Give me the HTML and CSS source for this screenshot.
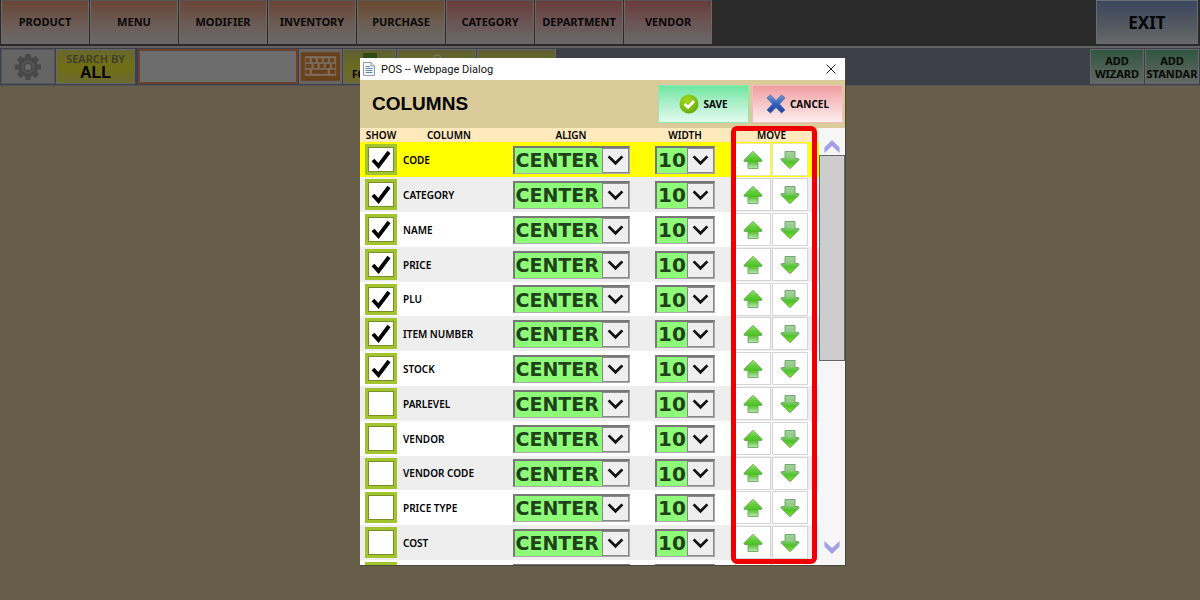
FILE: index.html
```html
<!DOCTYPE html>
<html lang="en">
<head>
<meta charset="utf-8">
<title>POS</title>
<link rel="stylesheet" href="styles.css">
</head>
<body>
<svg class="defs" aria-hidden="true">
  <defs>
    <linearGradient id="leafUp" x1="0" y1="0" x2="0" y2="1"><stop offset="0" stop-color="#9be07c"/><stop offset=".3" stop-color="#62cf3a"/><stop offset=".6" stop-color="#4fbf26"/><stop offset="1" stop-color="#c0e6b8"/></linearGradient>
    <linearGradient id="leafDown" x1="0" y1="0" x2="0" y2="1"><stop offset="0" stop-color="#a8cfa4"/><stop offset=".35" stop-color="#8fce84"/><stop offset=".6" stop-color="#4fc02c"/><stop offset="1" stop-color="#7fe624"/></linearGradient>
    <radialGradient id="okBall" cx=".4" cy=".3" r=".8"><stop offset="0" stop-color="#a5da1c"/><stop offset="1" stop-color="#62a80c"/></radialGradient>
    <linearGradient id="crossBlue" x1="0" y1="0" x2="0" y2="1"><stop offset="0" stop-color="#7398d8"/><stop offset=".5" stop-color="#3262bd"/><stop offset="1" stop-color="#1d3f9c"/></linearGradient>
  </defs>
  <symbol id="up" viewBox="0 0 20 20"><path d="M10 1.200 19 10.200Q19.200 11.500 18 11.500H15V18.500H5V11.500H2Q.800 11.500 1 10.200Z" fill="url(#leafUp)" stroke="#6aa95e" stroke-width=".9" stroke-linejoin="round"/></symbol>
  <symbol id="down" viewBox="0 0 20 20"><path d="M5 1.500H15V8.500H18Q19.200 8.500 19 9.800L10 18.800 1 9.800Q.800 8.500 2 8.500H5Z" fill="url(#leafDown)" stroke="#6aa066" stroke-width=".9" stroke-linejoin="round"/></symbol>
</svg>

<div class="page">
  <nav class="tabs">
    <button class="tab">PRODUCT</button>
    <button class="tab">MENU</button>
    <button class="tab">MODIFIER</button>
    <button class="tab">INVENTORY</button>
    <button class="tab tab-brown">PURCHASE</button>
    <button class="tab tab-red">CATEGORY</button>
    <button class="tab tab-red">DEPARTMENT</button>
    <button class="tab tab-red">VENDOR</button>
    <button class="exit">EXIT</button>
  </nav>
  <div class="toolbar">
    <button class="tool gear" aria-label="Settings">
      <svg width="28" height="28" viewBox="-15 -15 30 30"><g fill="#484848"><circle r="10.500"/><path d="M-3.500-9-2.500-14H2.500L3.500-9V9L2.500 14H-2.500L-3.500 9Z"/><path transform="rotate(45)" d="M-3.500-9-2.500-14H2.500L3.500-9V9L2.500 14H-2.500L-3.500 9Z"/><path transform="rotate(90)" d="M-3.500-9-2.500-14H2.500L3.500-9V9L2.500 14H-2.500L-3.500 9Z"/><path transform="rotate(135)" d="M-3.500-9-2.500-14H2.500L3.500-9V9L2.500 14H-2.500L-3.500 9Z"/></g><circle r="6" fill="none" stroke="#555" stroke-width="2"/><circle r="3.300" fill="#696969"/></svg>
    </button>
    <button class="tool search-by"><span class="search-hint">SEARCH BY</span><span class="search-mode">ALL</span></button>
    <input class="search-box" type="text" aria-label="Search">
    <button class="tool keyboard" aria-label="Keyboard">
      <svg width="39" height="29" viewBox="0 0 41 30"><rect width="41" height="30" fill="#68401a"/><rect x="4" y="4" width="33" height="21" rx="1" fill="#7a6a58"/><g stroke="#68401a" stroke-width="4"><path d="M5 8.500H36" stroke-dasharray="4 2.400"/><path d="M5 14.500H36" stroke-dasharray="6 2.400 4 2.400 4 2.400 4 2.400"/><path d="M5 20.500H9M11.500 20.500H28M30.500 20.500H36"/></g></svg>
    </button>
    <button class="tool yellow"><svg class="green-mark" width="14" height="10" aria-hidden="true"><rect width="14" height="10" rx="1" fill="#2c4a17"/></svg><span class="cut-label">FO</span></button>
    <button class="tool yellow wide" aria-label="Find"><svg width="14" height="30" viewBox="0 0 14 30"><circle cx="7" cy="6" r="4" fill="none" stroke="#777560" stroke-width="1.500"/></svg></button>
    <button class="tool yellow wide" aria-label="List"></button>
    <div class="add-group">
      <button class="tool add">ADD<br>WIZARD</button>
      <button class="tool add">ADD<br>STANDAR</button>
    </div>
  </div>
  <main class="canvas"></main>
</div>

<section class="dialog" role="dialog" aria-labelledby="dialog-title">
  <div class="titlebar">
    <svg width="12" height="14" viewBox="0 0 12 14"><path d="M.500.500H8L11.500 4V13.500H.500Z" fill="#f4f8fb" stroke="#8f9ba3"/><path d="M8 .500V4H11.500" fill="none" stroke="#8f9ba3"/><path d="M2.500 4.500H7M2.500 6.500H9.500M2.500 8.500H9.500M2.500 10.500H9.500" stroke="#5e8bb0"/></svg>
    <span class="window-name">POS -- Webpage Dialog</span>
    <button class="close" aria-label="Close"><svg width="10" height="10" viewBox="0 0 10 10"><path d="M.500.500 9.500 9.500M9.500.500.500 9.500" stroke="#222" fill="none"/></svg></button>
  </div>
  <header class="dialog-head">
    <h1 class="heading" id="dialog-title">COLUMNS</h1>
    <button class="action save"><svg width="20" height="20" viewBox="0 0 20 20"><circle cx="10" cy="10" r="9.500" fill="url(#okBall)"/><path d="M5.500 10 9 13.200 15 7" fill="none" stroke="#fff" stroke-width="2.800"/></svg>SAVE</button>
    <button class="action cancel"><svg width="20" height="20" viewBox="0 0 20 20"><path d="M1 4 4.500 1 10 6.500 15.500 1 19 4 13.500 10 19 16 15.500 19 10 13.500 4.500 19 1 16 6.500 10Z" fill="url(#crossBlue)" stroke="#3e64b0" stroke-width=".8"/></svg>CANCEL</button>
  </header>
  <div class="dialog-body">
    <div class="list">
      <table class="columns">
        <colgroup><col class="c-show"><col class="c-name"><col class="c-align"><col class="c-width"><col class="c-move"></colgroup>
        <thead><tr><th>SHOW</th><th>COLUMN</th><th>ALIGN</th><th>WIDTH</th><th>MOVE</th></tr></thead>
        <tbody id="rows"></tbody>
      </table>
    </div>
    <div class="scrollbar" aria-hidden="true">
      <svg class="scroll-arrow" width="18" height="13" viewBox="0 0 16 12"><path d="M1 12V7L8 0 15 7V12L8 5.500Z" fill="#a5a0e6"/></svg>
      <div class="thumb"></div>
      <svg class="scroll-arrow last" width="18" height="13" viewBox="0 0 16 12"><path d="M1 0V5L8 12 15 5V0L8 6.500Z" fill="#a5a0e6"/></svg>
    </div>
  </div>
  <div class="highlight"></div>
</section>
<script src="app.js"></script>
</body>
</html>
```
FILE: styles.css
```css
* { box-sizing: border-box; }
body { margin: 0; background: #665e48; font-family: "Noto Sans", sans-serif; color: #000; overflow: hidden; }
button { font: inherit; color: inherit; padding: 0; margin: 0; border: 0; border-radius: 0; }
svg { display: block; flex: none; }
.defs { position: absolute; width: 0; height: 0; }
.page { display: flex; flex-direction: column; min-height: 100vh; }

.tabs { display: flex; gap: 1px; height: 46px; padding: 0 2px 2px 1px; background: #2a2a2a; }
.tab { width: 88px; padding-bottom: 2px; border: 1px solid #6d6866; border-top-color: #555; background: linear-gradient(#694535, #6b5a53 50%, #6a6868); font-size: 11px; font-weight: 700; color: #080808; }
.tab-brown { background: linear-gradient(#69482f, #6b5d50 50%, #6a6868); }
.tab-red { background: linear-gradient(#683c3a, #6b5454 50%, #6a6868); }
.exit { width: 102px; margin-left: auto; border: 1px solid #686c73; background: linear-gradient(#3b475f, #50565f 50%, #666869); font-size: 17px; font-weight: 700; color: #060608; }

.toolbar { display: flex; gap: 1px; height: 40px; padding: 1px 1px 1px 1px; background: #3c3f47; border-top: 2px solid #626264; border-bottom: 1px solid #55545a; align-items: stretch; }
.tool { display: flex; align-items: center; justify-content: center; border: 1px solid #66676c; }
.gear { width: 54px; background: #656565; border-color: #515560; }
.search-by { width: 79px; flex-direction: column; background: linear-gradient(#69672f, #706f13 50%, #6b6a32); font-weight: 700; }
.search-hint { font-size: 11px; line-height: 12px; font-weight: 600; color: #3d3d27; }
.search-mode { font-family: "Liberation Sans", sans-serif; font-size: 16px; line-height: 15px; }
.search-box { width: 160px; margin-left: 2px; border: 2px solid #6b402c; background: #6d6d6d; border-radius: 0; padding: 0 4px; font: 14px "Noto Sans", sans-serif; }
.keyboard { width: 43px; background: #6b6560; }
.yellow { width: 53px; background: linear-gradient(#5f5e34, #6b6a20 45%, #6a6932); font-size: 10px; font-weight: 700; flex-direction: column; justify-content: space-between; align-items: center; padding: 3px 8px 2px; }
.wide { width: 79px; }
.cut-label { align-self: flex-start; }
.add-group { display: flex; gap: 1px; margin-left: auto; }
.add { width: 54px; overflow: hidden; white-space: nowrap; background: linear-gradient(#2f563f, #4b5f51 50%, #626864); font-size: 11px; line-height: 13px; font-weight: 700; color: #050805; }
.canvas { flex: 1; background: #665e48; }

.dialog { position: absolute; top: 58px; left: 30%; width: 486px; height: calc(100vh - 92px); display: flex; flex-direction: column; background: #fff; border: 1px solid #4a4638; border-top: 0; border-left: 0; }
.titlebar { display: flex; align-items: center; gap: 6px; height: 22px; flex: none; padding: 0 7px 0 3px; background: #fff; }
.window-name { font: 11px Roboto, sans-serif; color: #111; flex: 1; }
.close { background: none; width: 12px; height: 10px; }
.dialog-head { display: flex; align-items: center; gap: 3px; height: 48px; flex: none; padding: 0 2px 0 12px; background: #dbcb9a; }
.heading { flex: 1; margin: 0; font: 700 19px "Liberation Sans", sans-serif; }
.action { display: flex; align-items: center; justify-content: center; gap: 4px; width: 91px; height: 38px; font-size: 10px; font-weight: 700; border: 1px solid; }
.save { background: linear-gradient(#6fe7a0, #a9efc8 45%, #e2fbee); border-color: #8ee8b4; }
.cancel { background: linear-gradient(#f09ca0, #f6c3c5 45%, #fdeeee); border-color: #f3bcbc; }

.dialog-body { display: flex; flex: 1; min-height: 0; }
.list { flex: 1; overflow: hidden; }
.columns { width: 100%; table-layout: fixed; border-collapse: collapse; font-size: 10px; }
.c-show { width: 42px; }
.c-name { width: 94px; }
.c-align { width: 150px; }
.c-width { width: 78px; }
.c-move { width: 95px; }
.columns th { height: 14px; padding: 0; background: #fee9bc; line-height: 14px; font-weight: 600; text-align: center; }
.columns td { padding: 0; text-align: center; vertical-align: middle; line-height: 0; }
.row { height: 35px; background: #fff; }
.row:nth-child(5n) { height: 34px; }
.row:nth-child(even) { background: #eee; }
.row.selected { background: #ffff00; }
.columns .name { text-align: left; padding-left: 1px; line-height: 14px; font-weight: 600; }
.name label { display: block; }
.check { appearance: none; display: block; width: 32px; height: 31px; margin: 0 auto 0 5px; border: 3px solid #a2c42f; outline: 1px solid #788f28; outline-offset: -4px; background: #fff; }
.check:checked { background: #fff url("data:image/svg+xml,%3Csvg xmlns='http://www.w3.org/2000/svg' viewBox='0 0 26 25'%3E%3Cpath d='M5 13 10.500 19 21 5' fill='none' stroke='%23000' stroke-width='3.800'/%3E%3C/svg%3E") center / 26px 25px no-repeat; }
.pick { position: relative; display: inline-block; vertical-align: middle; }
.pick select { appearance: none; display: block; height: 28px; margin: 0; padding: 0 0 0 1px; border: 1px solid #aaa; border-top: 2px solid #777; border-left: 2px solid #777; border-radius: 0; background: #8efc78; color: #1f421b; font: 700 19px "DejaVu Sans", sans-serif; }
.pick-align select { width: 117px; }
.pick-width select { width: 60px; font-size: 20px; }
.pick svg { position: absolute; top: 2px; right: 1px; pointer-events: none; border: 1px solid #888; background: #efeff0; }
.moves { display: flex; justify-content: center; gap: 1px; }
.move { display: flex; align-items: center; justify-content: center; width: 36px; height: 33px; background: #fff; border: 1px solid #d4d4d4; }
.selected .move { border-color: #e8e8a8; }

.scrollbar { width: 26px; display: flex; flex-direction: column; align-items: center; background: #f6f6f6; }
.scroll-arrow { margin: 12px 0 2px; }
.thumb { width: 100%; height: 206px; background: #cdcdcd; border: 1px solid #666; }
.last { margin: auto 0 11px; }
.highlight { position: absolute; top: 68px; left: 371px; width: 86px; height: 438px; border: 5px solid #ee0000; border-radius: 6px; pointer-events: none; }
```
FILE: app.js
```javascript
const names = ["CODE", "CATEGORY", "NAME", "PRICE", "PLU", "ITEM NUMBER", "STOCK",
  "PARLEVEL", "VENDOR", "VENDOR CODE", "PRICE TYPE", "COST", ""];
const shown = 7;

const chevron = '<svg width="27" height="25" viewBox="0 0 27 25" aria-hidden="true">' +
  '<path d="M6 8 13.500 15.500 21 8" fill="none" stroke="#111" stroke-width="3"/></svg>';

const pick = (kind, value, label) =>
  `<span class="pick pick-${kind}"><select aria-label="${label}"><option>${value}</option></select>${chevron}</span>`;

const arrow = (id) =>
  `<button class="move" aria-label="Move ${id}"><svg width="20" height="20"><use href="#${id}"/></svg></button>`;

document.getElementById("rows").innerHTML = names.map((name, i) => `
  <tr class="row${i === 0 ? " selected" : ""}">
    <td><input class="check" type="checkbox" id="show-${i}"${i < shown ? " checked" : ""}></td>
    <td class="name"><label for="show-${i}">${name}</label></td>
    <td>${pick("align", "CENTER", name + " align")}</td>
    <td>${pick("width", "10", name + " width")}</td>
    <td><div class="moves">${arrow("up")}${arrow("down")}</div></td>
  </tr>`).join("");
```
